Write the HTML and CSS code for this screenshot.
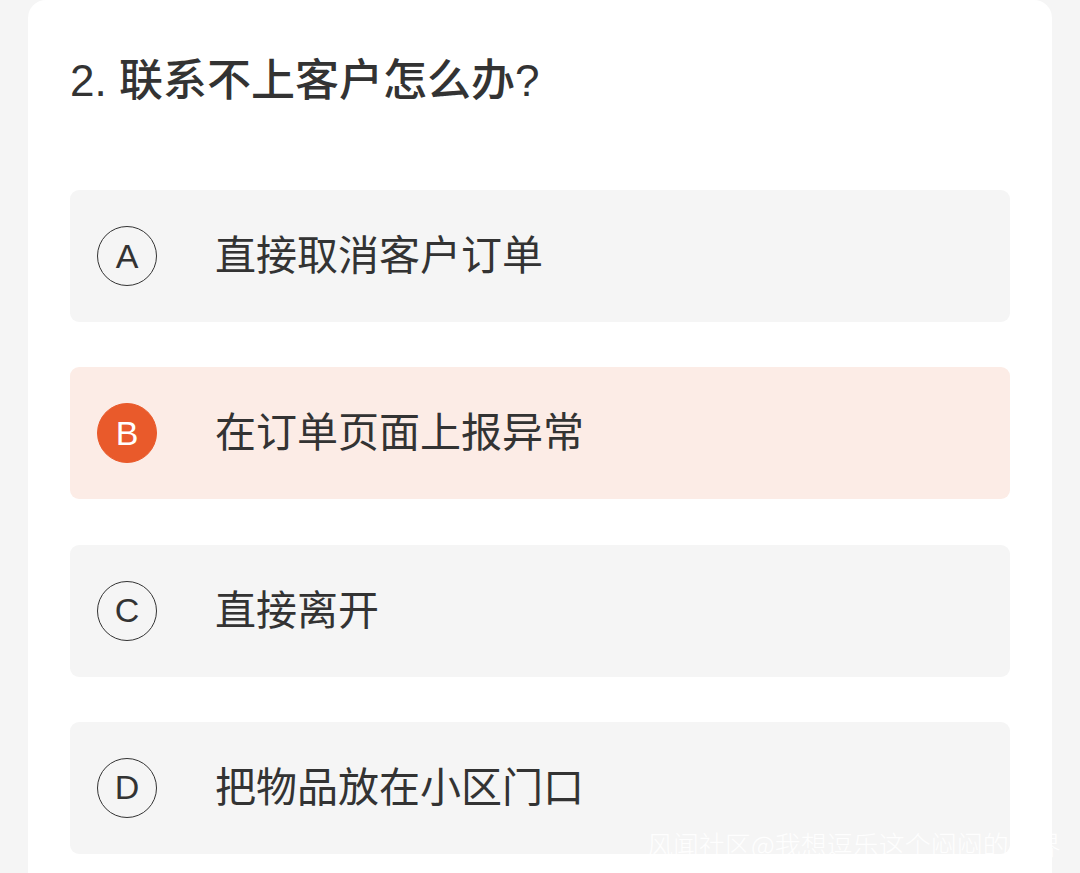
FILE: index.html
```html
<!DOCTYPE html>
<html lang="zh-CN">
<head>
<meta charset="utf-8">
<title>联系不上客户怎么办?</title>
<link rel="stylesheet" href="styles.css">
</head>
<body>
<div class="card">
  <h2 class="question">2. 联系不上客户怎么办?</h2>
  <div class="options">
    <div class="option">
      <span class="badge">A</span>
      <span class="label">直接取消客户订单</span>
    </div>
    <div class="option selected">
      <span class="badge">B</span>
      <span class="label">在订单页面上报异常</span>
    </div>
    <div class="option">
      <span class="badge">C</span>
      <span class="label">直接离开</span>
    </div>
    <div class="option">
      <span class="badge">D</span>
      <span class="label">把物品放在小区门口</span>
    </div>
  </div>
</div>
<div class="watermark">风闻社区@我想逗乐这个闷闷的世界</div>
</body>
</html>
```
FILE: styles.css
```css
html, body {
  margin: 0;
  padding: 0;
}
body {
  background: #f5f5f5;
  width: 1080px;
  height: 873px;
  overflow: hidden;
  position: relative;
  font-family: "Liberation Sans", "Noto Sans CJK SC", sans-serif;
  color: #333333;
}
.card {
  margin-left: 28px;
  width: 1024px;
  height: 873px;
  box-sizing: border-box;
  background: #ffffff;
  border-radius: 18px 18px 0 0;
  padding: 51px 42px 0 42px;
}
.question {
  margin: 0;
  font-size: 44px;
  line-height: 60px;
  font-weight: 500;
  color: #333333;
}
.options {
  margin-top: 79px;
  display: flex;
  flex-direction: column;
  gap: 45.3px;
}
.option {
  height: 132px;
  background: #f5f5f5;
  border-radius: 9px;
  display: flex;
  align-items: center;
  padding-left: 27px;
}
.option.selected {
  background: #fcece6;
}
.badge {
  width: 60px;
  height: 60px;
  box-sizing: border-box;
  border: 1.2px solid #333333;
  border-radius: 50%;
  display: flex;
  align-items: center;
  justify-content: center;
  font-size: 34px;
  color: #333333;
  flex-shrink: 0;
}
.selected .badge {
  background: #e95a2b;
  border-color: #e95a2b;
  color: #ffffff;
}
.label {
  margin-left: 58px;
  font-size: 41px;
  line-height: 56px;
  color: #333333;
}
.watermark {
  position: absolute;
  left: 647px;
  top: 826px;
  font-family: "Noto Sans CJK SC", sans-serif;
  font-size: 26px;
  font-weight: 300;
  line-height: 36px;
  color: rgba(255, 255, 255, 0.92);
  white-space: nowrap;
}
```
